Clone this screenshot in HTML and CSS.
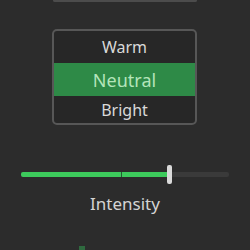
FILE: index.html
```html
<!DOCTYPE html>
<html lang="en">
<head>
  <meta charset="UTF-8">
  <title>Tone</title>
  <link rel="stylesheet" href="styles.css">
</head>
<body>
  <div class="stub-top"></div>

  <div class="picker">
    <div class="row row-warm">Warm</div>
    <div class="row row-sel">Neutral</div>
    <div class="row row-bright">Bright</div>
  </div>

  <div class="slider">
    <div class="track">
      <div class="fill" style="width: 146px"></div>
      <div class="tick"></div>
    </div>
    <div class="thumb" style="left: 146px"></div>
  </div>
  <div class="label">Intensity</div>

  <div class="stub-bottom"></div>
</body>
</html>
```

FILE: styles.css
```css
html, body {
  margin: 0;
  height: 250px;
  overflow: hidden;
}
body {
  background-color: #2c2c2c;
  font-family: "Noto Sans", sans-serif;
  color: #d9d9d9;
}
.stub-top {
  margin: 0 53px 0 53px;
  height: 0;
  border: 2px solid #4c4c4c;
  border-top: none;
  border-radius: 0 0 4px 4px;
}
.picker {
  margin: 27px 0 0 52px;
  width: 141px;
  border: 2px solid #575757;
  border-radius: 5px;
  background-color: #272727;
  overflow: hidden;
}
.row {
  display: flex;
  align-items: center;
  justify-content: center;
  font-size: 16px;
}
.row-warm {
  height: 32px;
}
.row-sel {
  height: 33px;
  font-size: 18px;
  background-color: #2e8a47;
  color: #b4e4ba;
}
.row-bright {
  height: 27px;
}
.slider {
  position: relative;
  margin: 40px 0 0 21px;
  width: 208px;
  height: 19px;
  display: flex;
  align-items: center;
}
.track {
  position: relative;
  width: 100%;
  height: 5px;
  background-color: #3a3a3a;
  border-radius: 2px;
  overflow: hidden;
}
.fill {
  height: 100%;
  background-color: #3dcb5c;
}
.tick {
  position: absolute;
  left: 100px;
  top: 0;
  width: 1px;
  height: 100%;
  background-color: #245c33;
}
.thumb {
  position: absolute;
  top: 0;
  width: 5px;
  height: 19px;
  background-color: #dadada;
  border-radius: 2px;
}
.label {
  margin-top: 10px;
  text-align: center;
  font-size: 17px;
  line-height: 20px;
  color: #d4d4d4;
}
.stub-bottom {
  margin: 32px 0 0 79px;
  width: 6px;
  height: 4px;
  background-color: #2f6a3f;
}
```
